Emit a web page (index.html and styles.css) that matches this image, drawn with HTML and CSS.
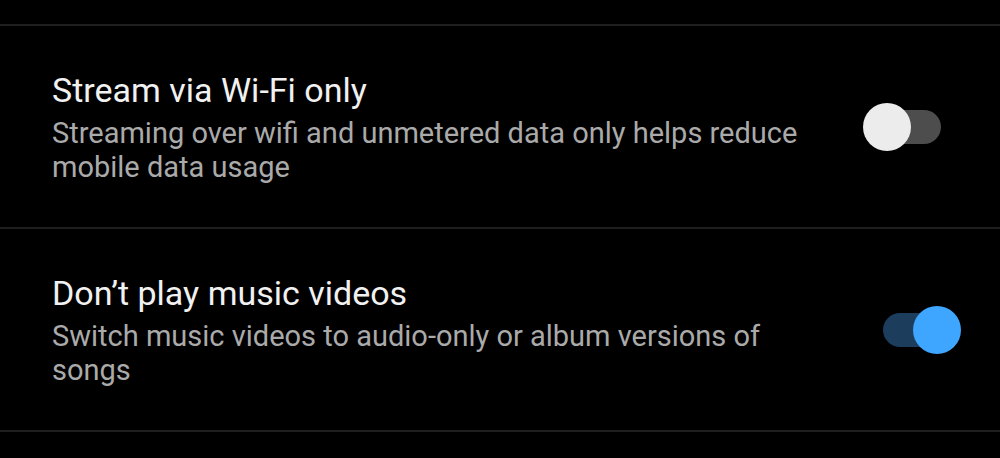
FILE: index.html
```html
<!DOCTYPE html>
<html lang="en">
<head>
<meta charset="utf-8">
<title>Settings</title>
<link rel="stylesheet" href="styles.css">
</head>
<body>
<div class="list">
  <div class="row">
    <div class="text">
      <div class="title">Stream via Wi-Fi only</div>
      <div class="subtitle">Streaming over wifi and unmetered data only helps reduce mobile data usage</div>
    </div>
    <div class="toggle">
      <div class="track"></div>
      <div class="thumb"></div>
    </div>
  </div>
  <div class="row">
    <div class="text">
      <div class="title">Don’t play music videos</div>
      <div class="subtitle">Switch music videos to audio-only or album versions of songs</div>
    </div>
    <div class="toggle on">
      <div class="track"></div>
      <div class="thumb"></div>
    </div>
  </div>
  <div class="row-end"></div>
</div>
</body>
</html>
```
FILE: styles.css
```css
html, body {
  margin: 0;
  padding: 0;
  background: #000;
}
body {
  font-family: Roboto, "Noto Sans", "Liberation Sans", sans-serif;
  width: 1000px;
  height: 458px;
  overflow: hidden;
}
.list {
  padding-top: 24px;
}
.row {
  display: flex;
  align-items: center;
  height: 201px;
  border-top: 2px solid #1f1f1f;
  padding: 0 39px 0 52px;
  gap: 31px;
}
.row-end {
  height: 24px;
  border-top: 2px solid #1f1f1f;
}
.text {
  flex: 1;
  min-width: 0;
}
.title {
  font-size: 34px;
  line-height: 40px;
  color: #f1f1f1;
}
.subtitle {
  margin-top: 6px;
  font-size: 29px;
  line-height: 34px;
  color: #aaaaaa;
}
.toggle {
  position: relative;
  width: 98px;
  height: 48px;
  flex: none;
  display: flex;
  align-items: center;
}
.track {
  margin: 0 20px;
  flex: 1;
  height: 34px;
  border-radius: 17px;
  background: #4d4d4d;
}
.thumb {
  position: absolute;
  top: 0;
  left: 0;
  width: 48px;
  height: 48px;
  border-radius: 50%;
  background: #ececec;
}
.toggle.on .track {
  background: #1c3d5c;
}
.toggle.on .thumb {
  left: auto;
  right: 0;
  background: #3ea6ff;
}
```
